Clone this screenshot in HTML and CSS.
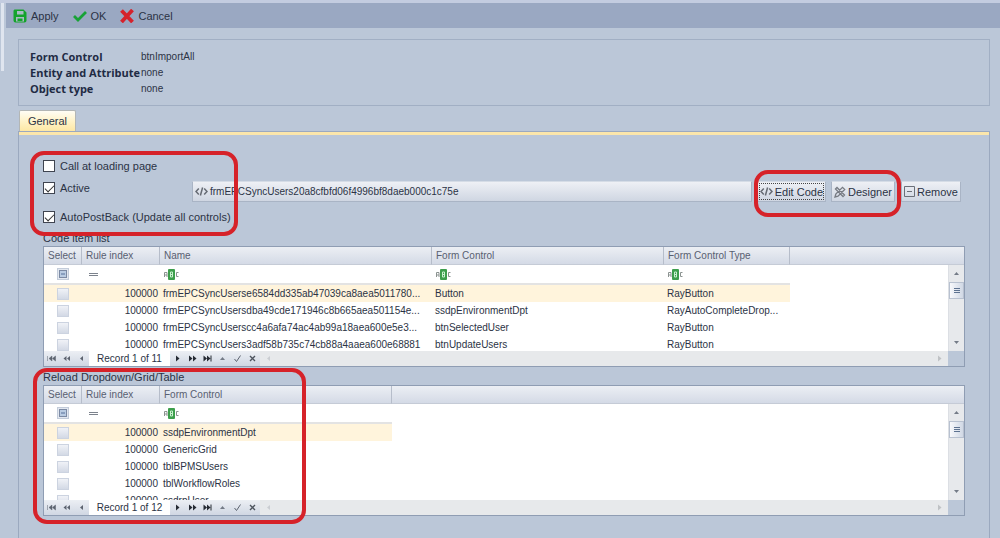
FILE: index.html
```html
<!DOCTYPE html>
<html lang="en">
<head>
<meta charset="utf-8">
<title>Form Control</title>
<link rel="stylesheet" href="styles.css">
</head>
<body>
<svg class="sprite" aria-hidden="true">
  <symbol id="code" viewBox="0 0 13 9"><path d="M3.800 1.500 1 4.500l2.800 3M9.200 1.500 12 4.500l-2.800 3M7.600.5 5.400 8.500" fill="none" stroke="#666b74" stroke-width="1.500"/></symbol>
  <symbol id="abc" viewBox="0 0 15 11"><path d="M.5 8V3.500h2.500V8M.5 6H3M14.500 3.500H12.500v4h2" fill="none" stroke="#8b9290"/><rect x="4" width="7" height="11" rx="1" fill="#3d9e4c"/><path d="M6.500 3h2v5h-2zM6.500 5.500h2" fill="none" stroke="#c9f0cf"/></symbol>
  <symbol id="equals" viewBox="0 0 9 5"><path d="M0 1.500h9M0 3.500h9" stroke="#7c828c"/></symbol>
  <symbol id="indeterminate" viewBox="0 0 12 12"><rect x=".5" y=".5" width="11" height="11" fill="#e3e8f0" stroke="#c3ccda"/><rect x="2.500" y="2.500" width="7" height="7" fill="#b9cbe2" stroke="#7c8aa4"/><path d="M4 6h4" stroke="#56709a"/></symbol>
  <symbol id="first" viewBox="0 0 9 7"><path d="M.5 1v5M5 1v5L2 3.500zM8.500 1v5L5.500 3.500z" fill="#5d6470" stroke="#5d6470" stroke-width=".5"/></symbol>
  <symbol id="back" viewBox="0 0 9 7"><path d="M4.500 1v5L1.500 3.500zM8 1v5L5 3.500z" fill="#5d6470"/></symbol>
  <symbol id="prev" viewBox="0 0 9 7"><path d="M6 1v5L3 3.500z" fill="#5d6470"/></symbol>
  <symbol id="next" viewBox="0 0 9 7"><path d="M3 .5v6l3.500-3z" fill="#252a33"/></symbol>
  <symbol id="forward" viewBox="0 0 9 7"><path d="M1 .5v6l3.500-3zM5 .5v6l3.500-3z" fill="#252a33"/></symbol>
  <symbol id="last" viewBox="0 0 9 7"><path d="M.5 .5v6l3.500-3zM4 .5v6l3.500-3zM7.500.5h1v6h-1z" fill="#252a33"/></symbol>
  <symbol id="up" viewBox="0 0 9 7"><path d="M2 5h5L4.500 2z" fill="#747b87"/></symbol>
  <symbol id="down" viewBox="0 0 9 7"><path d="M2 2h5L4.500 5z" fill="#747b87"/></symbol>
  <symbol id="tick" viewBox="0 0 9 7"><path d="M1.500 4 3.500 6.500 7.500.5" fill="none" stroke="#5d6470"/></symbol>
  <symbol id="cross" viewBox="0 0 9 7"><path d="m2 1 5 5M7 1 2 6" stroke="#4d545f" stroke-width="1.400"/></symbol>
</svg>

<header class="toolbar">
  <button class="tool"><svg width="14" height="14" viewBox="0 0 14 14"><path d="M1.500.5h9l3 3v8a2 2 0 0 1-2 2h-9a2 2 0 0 1-2-2v-9a2 2 0 0 1 1-2z" fill="#14a32c"/><path d="M4 2h6.500v3.500H4zM3 8h8v4.500H3z" fill="#a9bac4"/><path d="M4.500 9.500h5V12h-5z" fill="#14a32c"/></svg>Apply</button>
  <button class="tool"><svg width="14" height="14" viewBox="0 0 14 14"><path d="M1 7 5 11 13 3" fill="none" stroke="#18a236" stroke-width="2.800"/></svg>OK</button>
  <button class="tool"><svg width="14" height="14" viewBox="0 0 14 14"><path d="m1.500 1.500 11 11.500M12.500 1 1.500 13" fill="none" stroke="#d5222c" stroke-width="3.800"/></svg>Cancel</button>
</header>

<main class="page">
  <dl class="summary">
    <dt>Form Control</dt><dd>btnImportAll</dd>
    <dt>Entity and Attribute</dt><dd>none</dd>
    <dt>Object type</dt><dd>none</dd>
  </dl>

  <nav class="tabs"><button class="tab">General</button></nav>

  <section class="panel">
    <form class="options">
      <label class="check"><input type="checkbox">Call at loading page</label>
      <label class="check"><input type="checkbox" checked>Active</label>
      <div class="actions">
        <button type="button" class="btn rule-name"><svg width="13" height="9"><use href="#code"/></svg>frmEPCSyncUsers20a8cfbfd06f4996bf8daeb000c1c75e</button>
        <div class="pair">
          <button type="button" class="btn edit"><svg width="13" height="9"><use href="#code"/></svg>Edit Code</button>
          <button type="button" class="btn"><svg width="12" height="12" viewBox="0 0 12 12"><path d="m1.500 3 1.500-1.500 7.500 7.500-1.500 1.500zM1 11l.8-3L8.500 1.300l2.200 2.200L4 10.200z" fill="none" stroke="#777b83" stroke-width="1.300"/></svg>Designer</button>
          <span class="ring ring-buttons"></span>
        </div>
        <button type="button" class="btn"><svg width="11" height="11" viewBox="0 0 11 11"><path d="M.5.5h10v10H.5zM3 5.500h5" fill="none" stroke="#6b7079"/></svg>Remove</button>
      </div>
      <label class="check wide"><input type="checkbox" checked>AutoPostBack (Update all controls)</label>
      <span class="ring ring-options"></span>
    </form>

    <h2 class="caption">Code item list</h2>
    <div class="grid">
      <div class="view">
        <table class="data">
          <colgroup><col class="c-select"><col class="c-index"><col class="c-name"><col class="c-control"><col class="c-type"><col></colgroup>
          <thead>
            <tr><th>Select</th><th>Rule index</th><th>Name</th><th>Form Control</th><th>Form Control Type</th><th class="rest"></th></tr>
          </thead>
          <tbody>
            <tr class="filter"><td><svg width="12" height="12"><use href="#indeterminate"/></svg></td><td><svg width="9" height="5"><use href="#equals"/></svg></td><td><svg width="15" height="11"><use href="#abc"/></svg></td><td><svg width="15" height="11"><use href="#abc"/></svg></td><td><svg width="15" height="11"><use href="#abc"/></svg></td><td></td></tr>
            <tr class="current"><td><input type="checkbox" class="pick" aria-label="Select"></td><td class="num">100000</td><td>frmEPCSyncUserse6584dd335ab47039ca8aea5011780...</td><td>Button</td><td>RayButton</td><td></td></tr>
            <tr><td><input type="checkbox" class="pick" aria-label="Select"></td><td class="num">100000</td><td>frmEPCSyncUsersdba49cde171946c8b665aea501154e...</td><td>ssdpEnvironmentDpt</td><td>RayAutoCompleteDrop...</td><td></td></tr>
            <tr><td><input type="checkbox" class="pick" aria-label="Select"></td><td class="num">100000</td><td>frmEPCSyncUserscc4a6afa74ac4ab99a18aea600e5e3...</td><td>btnSelectedUser</td><td>RayButton</td><td></td></tr>
            <tr><td><input type="checkbox" class="pick" aria-label="Select"></td><td class="num">100000</td><td>frmEPCSyncUsers3adf58b735c74cb88a4aaea600e68881</td><td>btnUpdateUsers</td><td>RayButton</td><td></td></tr>
          </tbody>
        </table>
        <div class="vbar"><svg width="9" height="7"><use href="#up"/></svg><span class="thumb"></span><svg class="end" width="9" height="7"><use href="#down"/></svg></div>
      </div>
      <div class="pager">
        <button aria-label="First"><svg width="9" height="7"><use href="#first"/></svg></button>
        <button aria-label="Previous page"><svg width="9" height="7"><use href="#back"/></svg></button>
        <button aria-label="Previous"><svg width="9" height="7"><use href="#prev"/></svg></button>
        <span class="record">Record 1 of 11</span>
        <button aria-label="Next"><svg width="9" height="7"><use href="#next"/></svg></button>
        <button aria-label="Next page"><svg width="9" height="7"><use href="#forward"/></svg></button>
        <button aria-label="Last"><svg width="9" height="7"><use href="#last"/></svg></button>
        <button aria-label="Edit"><svg width="9" height="7"><use href="#up"/></svg></button>
        <button aria-label="Accept"><svg width="9" height="7"><use href="#tick"/></svg></button>
        <button aria-label="Cancel edit"><svg width="9" height="7"><use href="#cross"/></svg></button>
        <span class="hbar"><svg width="9" height="7"><use href="#prev"/></svg><svg width="9" height="7"><use href="#next"/></svg></span>
      </div>
    </div>

    <div class="reload">
      <h2 class="caption">Reload Dropdown/Grid/Table</h2>
      <div class="grid">
        <div class="view tall">
          <table class="data">
            <colgroup><col class="c-select"><col class="c-index"><col class="c-control"><col></colgroup>
            <thead>
              <tr><th>Select</th><th>Rule index</th><th>Form Control</th><th class="rest"></th></tr>
            </thead>
            <tbody>
              <tr class="filter"><td><svg width="12" height="12"><use href="#indeterminate"/></svg></td><td><svg width="9" height="5"><use href="#equals"/></svg></td><td><svg width="15" height="11"><use href="#abc"/></svg></td><td></td></tr>
              <tr class="current"><td><input type="checkbox" class="pick" aria-label="Select"></td><td class="num">100000</td><td>ssdpEnvironmentDpt</td><td></td></tr>
              <tr><td><input type="checkbox" class="pick" aria-label="Select"></td><td class="num">100000</td><td>GenericGrid</td><td></td></tr>
              <tr><td><input type="checkbox" class="pick" aria-label="Select"></td><td class="num">100000</td><td>tblBPMSUsers</td><td></td></tr>
              <tr><td><input type="checkbox" class="pick" aria-label="Select"></td><td class="num">100000</td><td>tblWorkflowRoles</td><td></td></tr>
              <tr><td><input type="checkbox" class="pick" aria-label="Select"></td><td class="num">100000</td><td>ssdrpUser</td><td></td></tr>
            </tbody>
          </table>
          <div class="vbar"><svg width="9" height="7"><use href="#up"/></svg><span class="thumb"></span><svg class="end" width="9" height="7"><use href="#down"/></svg></div>
        </div>
        <div class="pager">
          <button aria-label="First"><svg width="9" height="7"><use href="#first"/></svg></button>
          <button aria-label="Previous page"><svg width="9" height="7"><use href="#back"/></svg></button>
          <button aria-label="Previous"><svg width="9" height="7"><use href="#prev"/></svg></button>
          <span class="record">Record 1 of 12</span>
          <button aria-label="Next"><svg width="9" height="7"><use href="#next"/></svg></button>
          <button aria-label="Next page"><svg width="9" height="7"><use href="#forward"/></svg></button>
          <button aria-label="Last"><svg width="9" height="7"><use href="#last"/></svg></button>
          <button aria-label="Edit"><svg width="9" height="7"><use href="#up"/></svg></button>
          <button aria-label="Accept"><svg width="9" height="7"><use href="#tick"/></svg></button>
          <button aria-label="Cancel edit"><svg width="9" height="7"><use href="#cross"/></svg></button>
          <span class="hbar"><svg width="9" height="7"><use href="#prev"/></svg><svg width="9" height="7"><use href="#next"/></svg></span>
        </div>
      </div>
      <span class="ring ring-reload"></span>
    </div>
  </section>
</main>
</body>
</html>
```
FILE: styles.css
```css
* { box-sizing: border-box; }

body {
  margin: 0;
  min-height: 100vh;
  display: flex;
  flex-direction: column;
  padding-left: 6px;
  border-top: 3px solid #c3cce0;
  background: linear-gradient(#dfe5ef, #dfe5ef) 1px 0 / 3px 71px no-repeat, #bbc7d8;
  color: #2b3345;
  font: 11px/16px "Liberation Sans", Arial, sans-serif;
}

button, input { font: inherit; color: inherit; margin: 0; }
svg { flex: none; display: block; }
.sprite { position: absolute; width: 0; height: 0; }

.toolbar {
  display: flex;
  align-items: center;
  gap: 14px;
  height: 25px;
  padding-left: 7px;
  background: #9aa8c2;
}
.tool {
  display: flex;
  align-items: center;
  gap: 4px;
  padding: 0;
  border: 0;
  background: none;
}

.page {
  flex: 1;
  display: flex;
  flex-direction: column;
  padding: 11px 10px 0 12px;
}

.summary {
  display: grid;
  grid-template-columns: 111px 1fr;
  margin: 0;
  padding: 9px 11px 8px;
  border: 1px solid #a1afc4;
}
.summary dt { font: bold 11px/16px "Open Sans", sans-serif; white-space: nowrap; color: #1f2b44; }
.summary dd { margin: 0; font-size: 10px; }

.tabs { display: flex; margin-top: 4px; }
.tab {
  height: 21px;
  width: 57px;
  margin-left: 1px;
  padding: 0;
  border: 1px solid #b3b6b5;
  border-bottom: 0;
  border-radius: 2px 2px 0 0;
  background: linear-gradient(#fffdf5, #fff3c9 50%, #fde7a4);
}

.panel {
  flex: 1;
  padding: 23px 24px 0;
  border: 1px solid #9ba9bf;
  border-bottom: 0;
  box-shadow: inset 0 3px #fbe6ab;
}

.options {
  position: relative;
  display: grid;
  grid-template-columns: 149px 1fr;
  row-gap: 8px;
  padding-top: 4px;
}
.options > .check:first-child, .wide { grid-column: 1 / -1; }
.check {
  display: flex;
  align-items: center;
  gap: 5px;
  height: 14px;
  white-space: nowrap;
}
.check input {
  appearance: none;
  width: 12px;
  height: 12px;
  border: 1px solid #3f4450;
  background: #fff;
}
.check input:checked::after {
  content: "";
  display: block;
  width: 8px;
  height: 4px;
  margin: 2px 1px;
  border: solid #333;
  border-width: 0 0 1px 1px;
  rotate: -45deg;
}

.actions { display: flex; gap: 5px; padding-right: 4px; }
.pair { position: relative; display: flex; gap: 5px; margin-right: 1px; }
.btn {
  display: flex;
  align-items: center;
  gap: 2px;
  height: 21px;
  padding: 0 2px;
  border: 1px solid #a9b4c5;
  border-top-color: #d5dce6;
  background: linear-gradient(#eef0f5, #cfd6e2);
  white-space: nowrap;
}
.rule-name { flex: 1; font-size: 10px; }
.edit { outline: 1px dotted #444; outline-offset: -3px; }

.caption {
  margin: 0;
  font-size: 11px;
  font-weight: normal;
  line-height: 16px;
}
.options + .caption { margin-top: 6px; }

.grid { border: 1px solid #8f9db3; background: #fff; font-size: 10px; }
.view {
  display: grid;
  grid-template-rows: minmax(0, 1fr);
  height: 104px;
  overflow: hidden;
}
.view.tall { height: 114px; }
.data, .vbar { grid-area: 1 / 1; }
.data {
  align-self: start;
  width: 100%;
  table-layout: fixed;
  border-collapse: separate;
  border-spacing: 0;
}
.c-select { width: 38px; }
.c-index { width: 78px; }
.c-name { width: 272px; }
.c-control { width: 232px; }
.c-type { width: 126px; }
.data th {
  height: 18px;
  padding: 0 4px;
  border-right: 1px solid #b6bdca;
  border-bottom: 1px solid #c5cbd6;
  background: linear-gradient(#eceff4, #d4dae6);
  font-weight: normal;
  text-align: left;
  line-height: 16px;
  white-space: nowrap;
  color: #596071;
}
.data .rest { border-right: 0; }
.data td {
  height: 17px;
  padding: 0 3px;
  line-height: 16px;
  white-space: nowrap;
}
.data .filter td { height: 20px; padding-left: 4px; border-bottom: 2px solid #e3e3e3; }
.data .filter td:nth-child(2) { padding-left: 7px; }
.data .filter td:last-child { border-bottom: 0; }
.current td { background: #fff4dc; }
.current td:last-child { background: #fff; }
.data .num { text-align: right; padding-right: 2px; }
.data td:first-child, .data .filter td:first-child { padding-left: 13px; }
.pick {
  appearance: none;
  display: block;
  width: 12px;
  height: 12px;
  border: 1px solid #ccd3e0;
  background: linear-gradient(#f0f2f7, #d3d9e5);
}

.vbar {
  justify-self: end;
  display: flex;
  flex-direction: column;
  align-items: center;
  gap: 5px;
  width: 16px;
  margin-top: 18px;
  padding: 5px 0;
  border-left: 1px solid #dcdfe4;
  background: #e7e9ec;
}
.vbar .end { margin-top: auto; }
.thumb {
  width: 15px;
  height: 17px;
  border: 1px solid #b8c1d0;
  background:
    repeating-linear-gradient(#5d7290 0 1px, transparent 1px 2px) center / 6px 5px no-repeat,
    linear-gradient(90deg, #f7f8fb, #d0d8e5);
}

.pager {
  display: flex;
  align-items: stretch;
  height: 15px;
  padding-right: 16px;
  background: #bbc7d8;
}
.pager button {
  display: grid;
  place-items: center;
  width: 15px;
  padding: 0;
  border: 0;
  background: linear-gradient(#eceff4, #d0d7e3);
}
.record {
  width: 81px;
  text-align: center;
  line-height: 15px;
  background: #fff;
}
.hbar {
  flex: 1;
  display: flex;
  justify-content: space-between;
  align-items: center;
  padding: 0 4px;
  background: #e7e9eb;
}
.hbar svg { opacity: .2; }

.reload { position: relative; padding-top: 1px; }
.reload .caption { padding-top: 1px; }

.ring {
  position: absolute;
  border: 4px solid #d62229;
  border-radius: 14px;
  pointer-events: none;
}
.ring-options { left: -13px; top: -4px; width: 208px; height: 85px; }
.ring-buttons { left: -3px; right: -6px; top: -11px; bottom: -15px; }
.ring-reload { left: -10px; top: 1px; width: 273px; height: 156px; }
```
